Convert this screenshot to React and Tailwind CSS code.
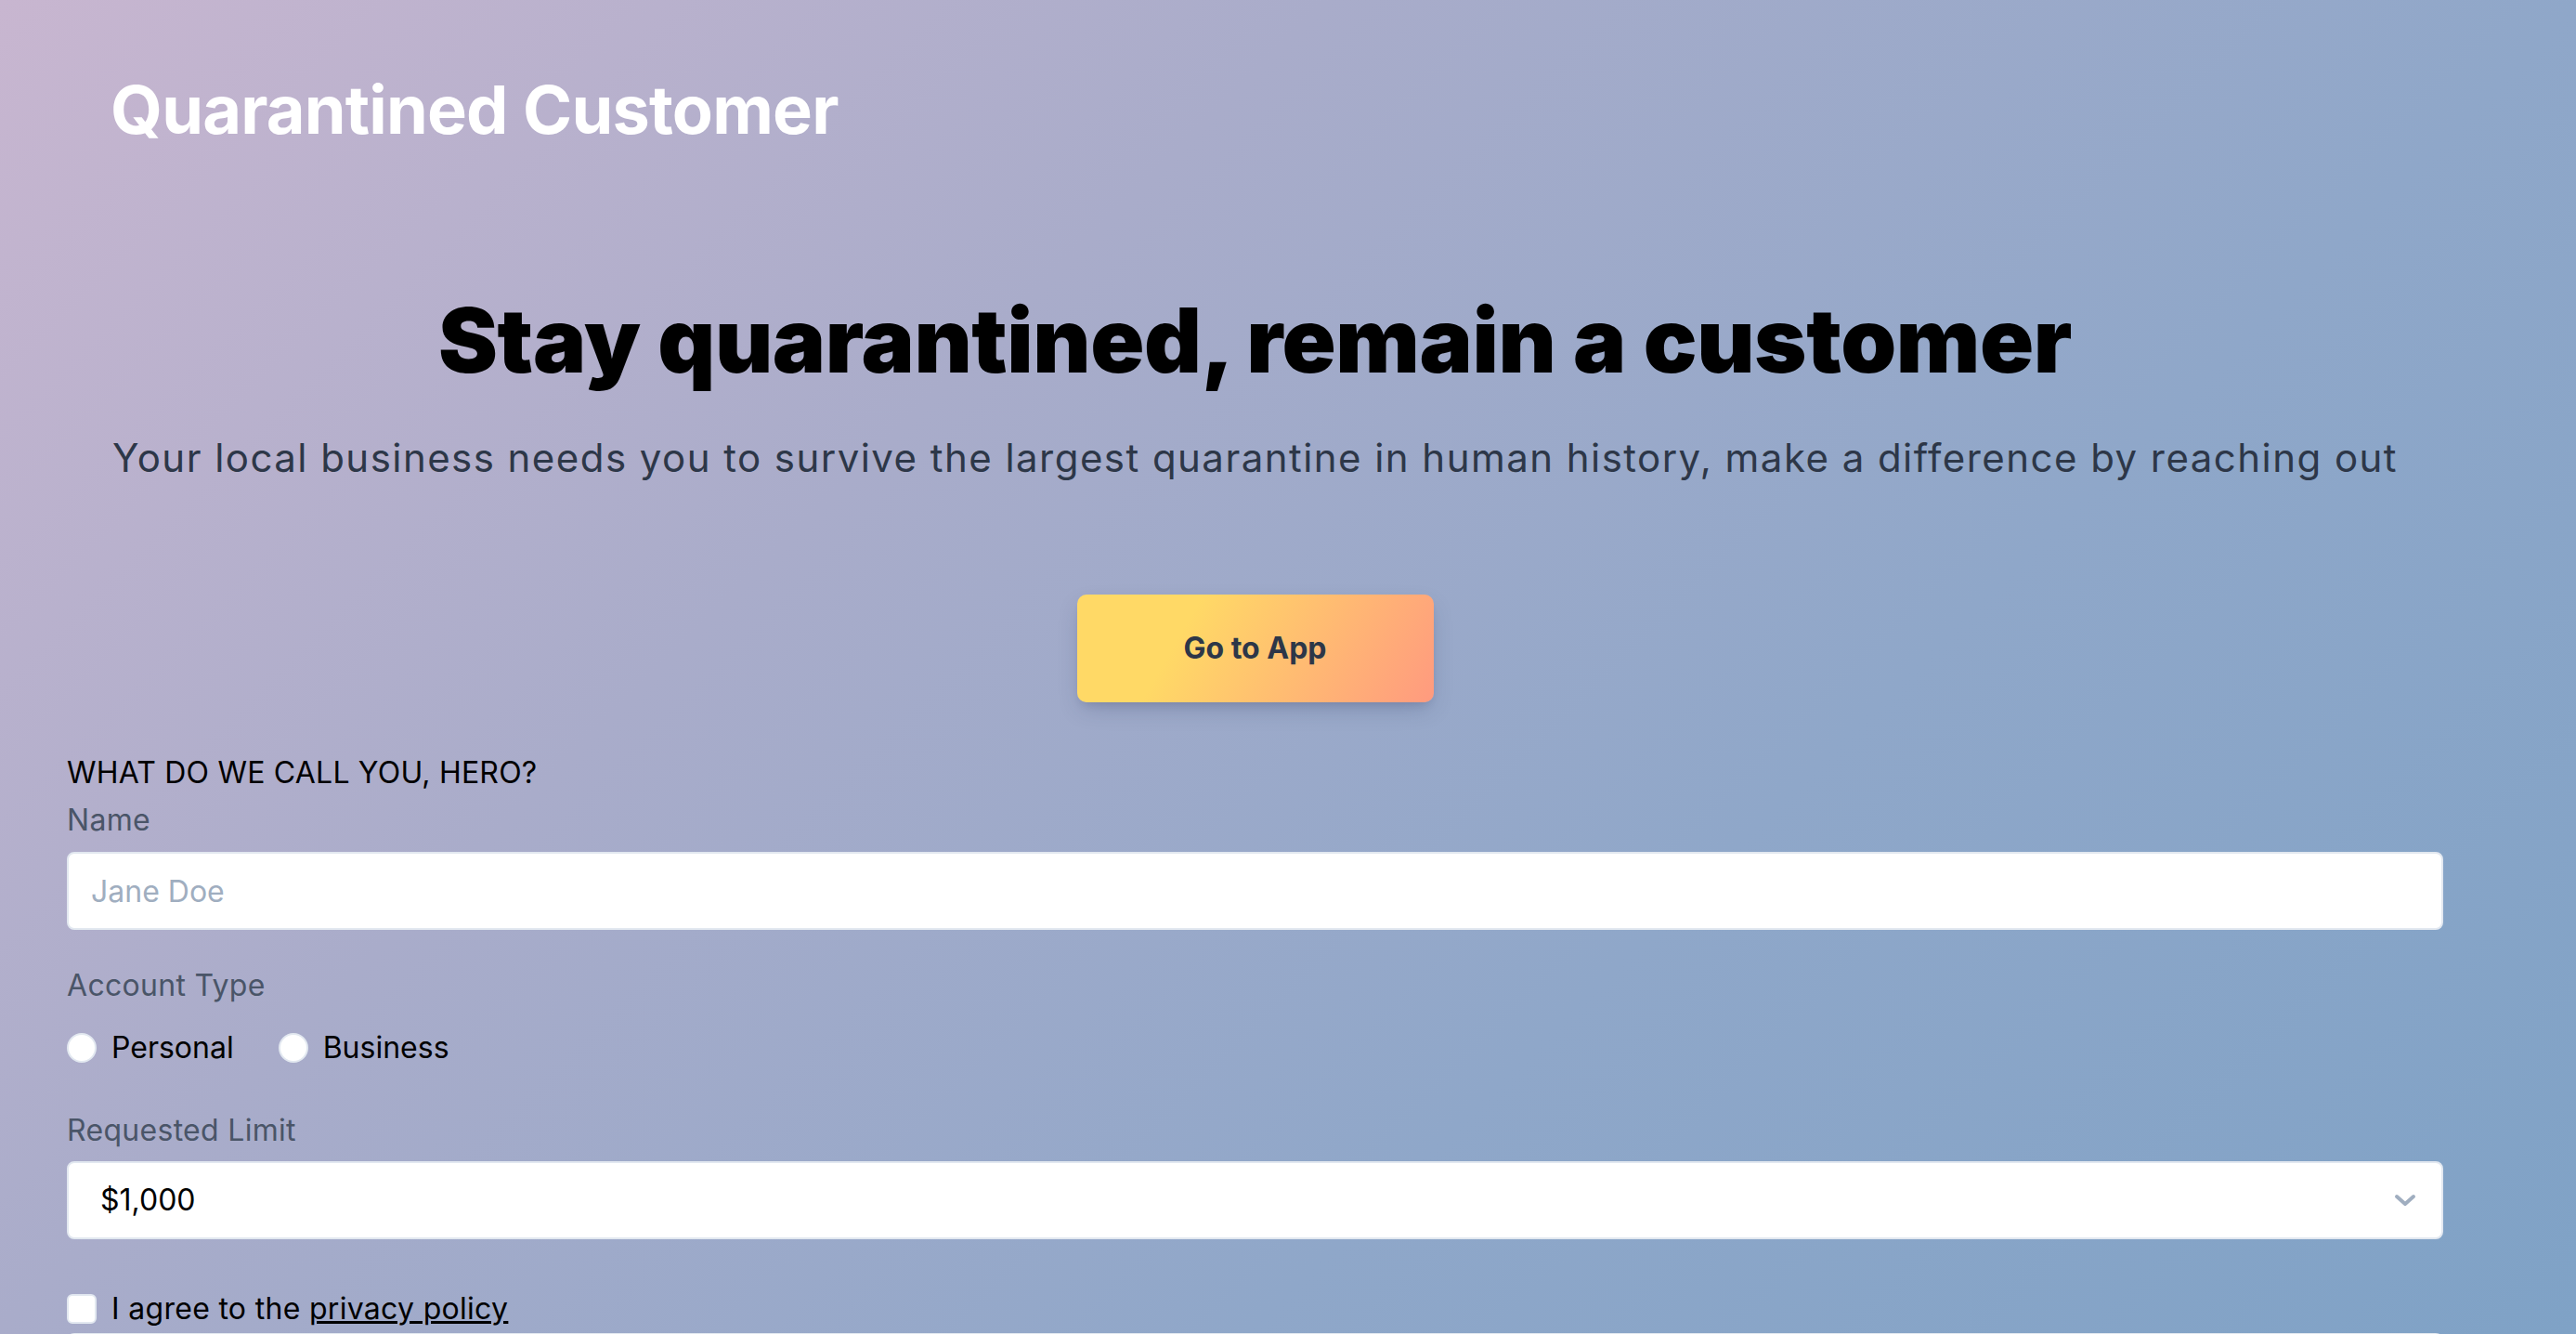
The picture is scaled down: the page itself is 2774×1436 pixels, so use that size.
import { useState } from 'react';

const ChevronDown = () => (
  <svg viewBox="0 0 24 14" className="h-[14px] w-[24px]" fill="none" stroke="#a0aec0" strokeWidth="4" strokeLinecap="round" strokeLinejoin="round">
    <path d="M3 3l9 8 9-8" />
  </svg>
);

const Field = ({ label, children }) => (
  <div className="flex flex-col">
    <label className="text-[32px] leading-[40px] tracking-[0.3px] text-[#4a5568]">{label}</label>
    {children}
  </div>
);

const App = () => {
  const [accountType, setAccountType] = useState('');

  return (
    <div
      className="min-h-screen bg-fixed font-['Inter',sans-serif] bg-[linear-gradient(135deg,#c8b6d0_0%,#a9acca_34%,#8fa7c9_66%,#7fa2c6_100%)]"
    >
      <header className="px-[119px] pt-[78px]">
        <h1 className="text-[72px] font-bold leading-[80px] tracking-[-0.8px] text-white">Quarantined Customer</h1>
      </header>

      <main className="w-[2631px] pl-[72px]">
        <section className="flex flex-col items-center pt-[160px] text-center">
          <h2 className="text-[96px] font-black leading-[96px] tracking-[-0.4px] text-black">
            Stay quarantined, remain a customer
          </h2>
          <p className="mt-[51px] text-[42px] leading-[56px] tracking-[1.45px] text-[#2d3748]">
            Your local business needs you to survive the largest quarantine in human history, make a difference by reaching out
          </p>
          <button
            type="button"
            className="mt-[119px] h-[116px] w-[384px] rounded-[10px] bg-[linear-gradient(120deg,#ffd966_30%,#ff9a7f_100%)] text-[32px] font-bold text-[#2d3748] shadow-[0_10px_25px_-5px_rgba(40,50,90,0.25),0_6px_10px_-5px_rgba(40,50,90,0.15)]"
          >
            Go to App
          </button>
        </section>

        <form className="mt-[52px] flex flex-col">
          <p className="text-[32px] uppercase leading-[48px] tracking-[0.2px] text-black">What do we call you, hero?</p>

          <div className="mt-[7px]">
            <Field label="Name">
              <input
                type="text"
                placeholder="Jane Doe"
                className="mt-[14px] h-[84px] w-full rounded-[8px] border-2 border-[#e2e8f0] bg-white px-[24px] text-[32px] text-black outline-none placeholder:text-[#a0aec0]"
              />
            </Field>
          </div>

          <div className="mt-[40px]">
            <Field label="Account Type">
              <div className="mt-[23px] flex items-center text-[32px] leading-[48px] text-black">
                {['Personal', 'Business'].map((type) => (
                  <label key={type} className="mr-[48px] flex items-center gap-[16px]">
                    <input
                      type="radio"
                      name="accountType"
                      checked={accountType === type}
                      onChange={() => setAccountType(type)}
                      className="h-[32px] w-[32px] appearance-none rounded-full border-2 border-[#e2e8f0] bg-white"
                    />
                    {type}
                  </label>
                ))}
              </div>
            </Field>
          </div>

          <div className="mt-[45px]">
            <Field label="Requested Limit">
              <div className="relative mt-[13px]">
                <select className="h-[84px] w-full appearance-none rounded-[8px] border-2 border-[#e2e8f0] bg-white px-[34px] text-[32px] text-black outline-none">
                  <option>$1,000</option>
                  <option>$5,000</option>
                  <option>$10,000</option>
                </select>
                <span className="pointer-events-none absolute right-[29px] top-1/2 flex -translate-y-1/2">
                  <ChevronDown />
                </span>
              </div>
            </Field>
          </div>

          <label className="mt-[51px] flex items-center gap-[16px] text-[32px] leading-[48px] tracking-[0.3px] text-black">
            <input type="checkbox" className="h-[32px] w-[32px] appearance-none rounded-[6px] border-2 border-[#e2e8f0] bg-white" />
            <span>
              I agree to the <a href="#" className="underline">privacy policy</a>
            </span>
          </label>

          <textarea
            rows={4}
            className="mt-[2px] w-full rounded-[8px] border-2 border-[#e2e8f0] bg-white px-[24px] py-[16px] text-[32px] outline-none"
          />
        </form>
      </main>
    </div>
  );
};

export default App;
